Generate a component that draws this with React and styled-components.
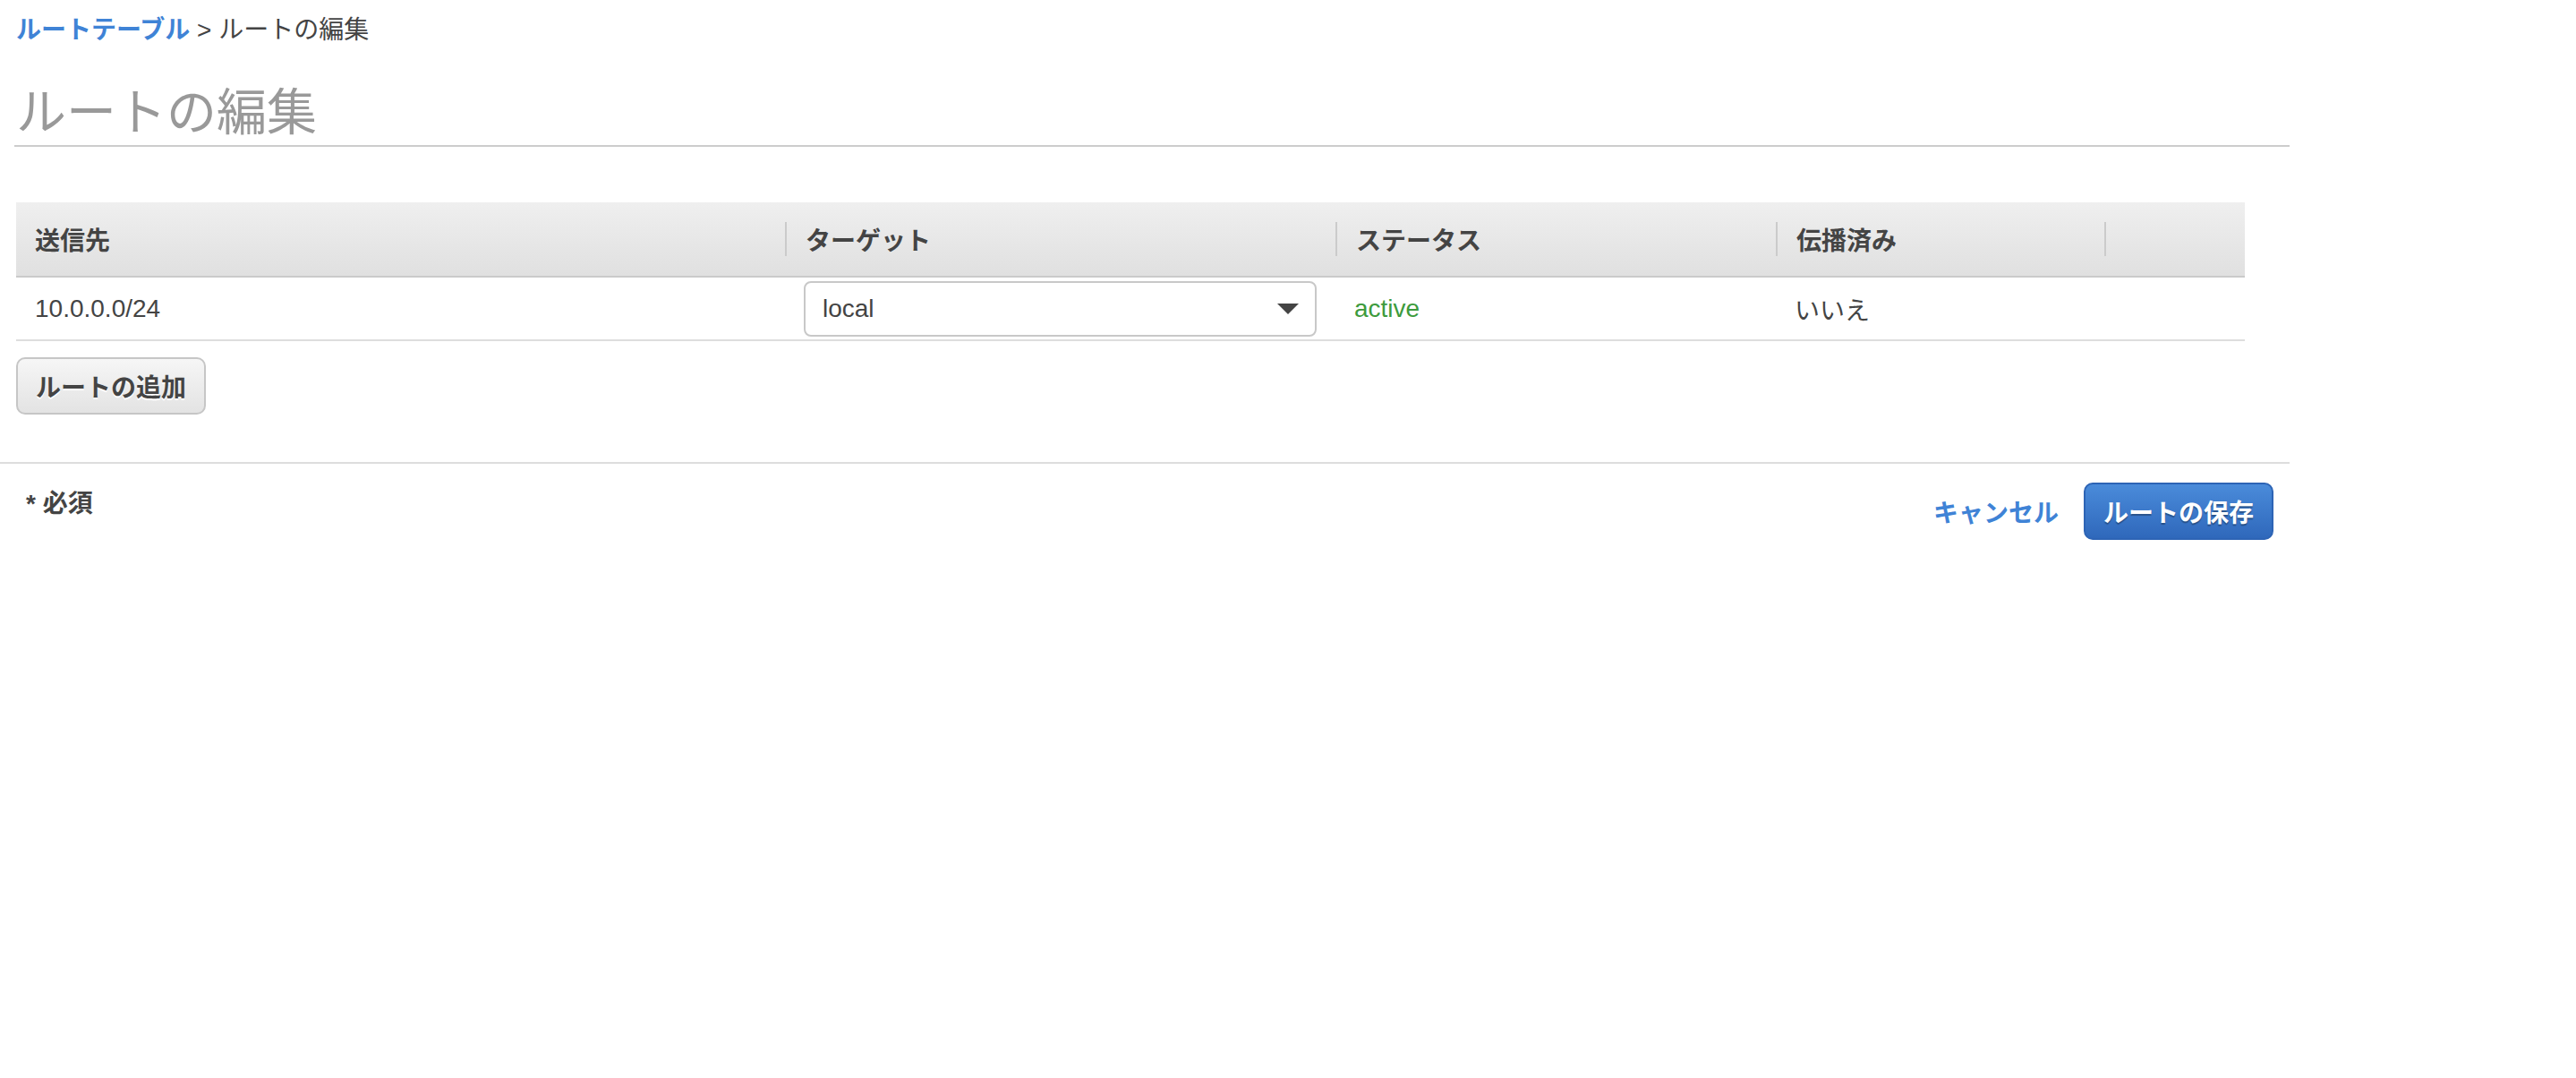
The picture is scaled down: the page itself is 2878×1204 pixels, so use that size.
import React from 'react'
import styled, { createGlobalStyle } from 'styled-components'

const GlobalStyle = createGlobalStyle`
  body {
    margin: 0;
    background: #fff;
    color: #444;
    font-family: "Liberation Sans", "Noto Sans CJK JP", sans-serif;
  }
`

const columns = '859px 615px 492px 367px 157px'

const App = () => {
  return (
    <>
      <GlobalStyle />
      <Page>
        <Breadcrumb>
          <Crumb href="#">ルートテーブル</Crumb>
          <Current> &gt; ルートの編集</Current>
        </Breadcrumb>

        <Title>ルートの編集</Title>

        <Table>
          <HeaderRow>
            <HeaderCell $first>送信先</HeaderCell>
            <HeaderCell>ターゲット</HeaderCell>
            <HeaderCell>ステータス</HeaderCell>
            <HeaderCell>伝播済み</HeaderCell>
            <HeaderCell />
          </HeaderRow>
          <Row>
            <Cell>10.0.0.0/24</Cell>
            <Cell>
              <Select>
                <span>local</span>
                <svg width="24" height="12" viewBox="0 0 24 12">
                  <polygon points="0,0 24,0 12,12" fill="#444" />
                </svg>
              </Select>
            </Cell>
            <Cell $status>active</Cell>
            <Cell>いいえ</Cell>
            <Cell />
          </Row>
        </Table>

        <AddButton>ルートの追加</AddButton>

        <Footer>
          <Required>* 必須</Required>
          <Actions>
            <Cancel href="#">キャンセル</Cancel>
            <SaveButton>ルートの保存</SaveButton>
          </Actions>
        </Footer>
      </Page>
    </>
  )
}

const Page = styled.div`
  width: 2558px;
`

const Breadcrumb = styled.nav`
  padding: 14px 0 0 18px;
  font-size: 28px;
  line-height: 40px;
`

const Crumb = styled.a`
  color: #3f83d6;
  font-weight: bold;
  text-decoration: none;
`

const Current = styled.span`
  color: #444;
`

const Title = styled.h1`
  margin: 40px 0 0 16px;
  padding: 0 0 4px 2px;
  font-size: 56px;
  line-height: 64px;
  font-weight: normal;
  color: #999;
  border-bottom: 2px solid #ccc;
`

const Table = styled.div`
  margin: 62px 0 0 18px;
  width: 2490px;
`

const HeaderRow = styled.div`
  display: grid;
  grid-template-columns: ${columns};
  height: 82px;
  background: linear-gradient(#efefef, #e0e0e0);
  border-bottom: 2px solid #cacaca;
`

const HeaderCell = styled.div`
  align-self: center;
  height: 38px;
  display: flex;
  align-items: center;
  padding-left: 21px;
  border-left: ${p => (p.$first ? 'none' : '2px solid #cbcbcb')};
  font-size: 28px;
  font-weight: bold;
  color: #444;
`

const Row = styled.div`
  display: grid;
  grid-template-columns: ${columns};
  height: 69px;
  align-items: center;
  border-bottom: 2px solid #ddd;
`

const Cell = styled.div`
  padding: 0 21px;
  font-size: 28px;
  color: ${p => (p.$status ? '#3d9b3d' : '#444')};
`

const Select = styled.div`
  box-sizing: border-box;
  height: 62px;
  display: flex;
  align-items: center;
  justify-content: space-between;
  padding: 0 18px 0 19px;
  border: 2px solid #c8c8c8;
  border-radius: 8px;
  background: #fff;
`

const AddButton = styled.button`
  display: block;
  margin: 18px 0 0 18px;
  height: 64px;
  padding: 0 20px;
  border: 2px solid #c6c6c6;
  border-radius: 10px;
  background: linear-gradient(#f6f6f6, #e3e3e3);
  font-family: inherit;
  font-size: 28px;
  font-weight: bold;
  color: #444;
  text-shadow: 0 2px 0 #fff;
`

const Footer = styled.footer`
  margin-top: 53px;
  border-top: 2px solid #ddd;
  padding: 21px 18px 0 29px;
  display: flex;
  justify-content: space-between;
  align-items: flex-start;
`

const Required = styled.div`
  margin-top: 4px;
  font-size: 28px;
  line-height: 40px;
  font-weight: bold;
  color: #444;
`

const Actions = styled.div`
  display: flex;
  align-items: center;
  gap: 28px;
`

const Cancel = styled.a`
  color: #3f83d6;
  font-size: 28px;
  font-weight: bold;
  text-decoration: none;
`

const SaveButton = styled.button`
  height: 64px;
  padding: 0 20px;
  border: 2px solid #2d64b5;
  border-radius: 10px;
  background: linear-gradient(#4a8bda, #2f68bb);
  font-family: inherit;
  font-size: 28px;
  font-weight: bold;
  color: #fff;
  text-shadow: 0 2px 1px rgba(0, 0, 0, 0.3);
`

export default App
